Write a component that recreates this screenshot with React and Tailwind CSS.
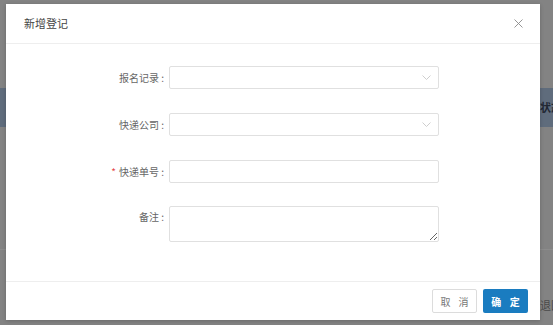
import React from "react"

const font = { fontFamily: '"Noto Sans CJK SC", "Noto Sans", sans-serif' }

function Chevron() {
  return (
    <svg width="9" height="5" viewBox="0 0 9 5" fill="none" stroke="#c8c8c8" strokeWidth="0.9">
      <polyline points="0.5,0.5 4.5,4.5 8.5,0.5" />
    </svg>
  )
}

function Row({ label, required, children, top, className = "" }) {
  return (
    <div className={`flex ${top ? "items-start" : "items-center"} ${className}`}>
      <label
        className={`w-[103px] shrink-0 text-right text-[10px] text-[#666] pr-[5px] whitespace-nowrap ${top ? "pt-[3px]" : ""}`}
      >
        {required && <span className="text-[#e5484d] mr-[3px]">*</span>}
        {label} :
      </label>
      {children}
    </div>
  )
}

function SelectBox() {
  return (
    <div className="w-[270px] h-[23px] border border-[#e0e0e0] rounded-[2px] bg-white flex items-center justify-end pr-[7px]">
      <Chevron />
    </div>
  )
}

export default function App() {
  return (
    <div className="relative w-[553px] h-[325px] overflow-hidden bg-[#838383]" style={font}>
      {/* page behind the mask */}
      <div className="h-[88px]" />
      <div className="h-[39px] bg-[#5f6c7c] flex items-center">
        <span className="ml-[540px] whitespace-nowrap text-[11px] font-bold text-[#1f2733]">状态</span>
      </div>
      <div className="h-[122px]" />
      <div className="h-px bg-[#8c8c8c]" />
      <div className="h-[110px] flex items-center">
        <span className="ml-[540px] whitespace-nowrap text-[11px] text-[#4a4a4a]">退回</span>
      </div>

      {/* modal */}
      <div className="absolute left-[6px] top-[4px] w-[534px] h-[316px] bg-white flex flex-col shadow-[0_1px_4px_rgba(0,0,0,0.2)]">
        <div className="h-[40px] shrink-0 border-b border-[#eeeeee] flex items-center justify-between pl-[18px] pr-[17px]">
          <span className="text-[11px] text-[#444]">新增登记</span>
          <svg width="9" height="9" viewBox="0 0 9 9" stroke="#8a8a8a" strokeWidth="0.9">
            <line x1="0.5" y1="0.5" x2="8.5" y2="8.5" />
            <line x1="8.5" y1="0.5" x2="0.5" y2="8.5" />
          </svg>
        </div>

        <div className="flex-1 flex flex-col gap-[24px] pt-[22px] pl-[60px]">
          <Row label="报名记录">
            <SelectBox />
          </Row>
          <Row label="快递公司">
            <SelectBox />
          </Row>
          <Row label="快递单号" required>
            <input className="w-[270px] h-[23px] border border-[#e0e0e0] rounded-[2px] outline-none" />
          </Row>
          <Row label="备注" top className="-mt-px">
            <textarea className="block w-[270px] h-[36px] border border-[#e0e0e0] rounded-[2px] outline-none" />
          </Row>
        </div>

        <div className="h-[39px] shrink-0 border-t border-[#eeeeee] flex items-center justify-end gap-[6px] pr-[12px]">
          <button className="w-[45px] h-[24px] border border-[#dcdcdc] rounded-[2px] bg-white text-[10px] text-[#777] tracking-[3px] pl-[3px]">
            取 消
          </button>
          <button className="w-[45px] h-[24px] rounded-[2px] bg-[#1a7cc0] text-[10px] font-bold text-white tracking-[3px] pl-[3px]">
            确 定
          </button>
        </div>
      </div>
    </div>
  )
}
